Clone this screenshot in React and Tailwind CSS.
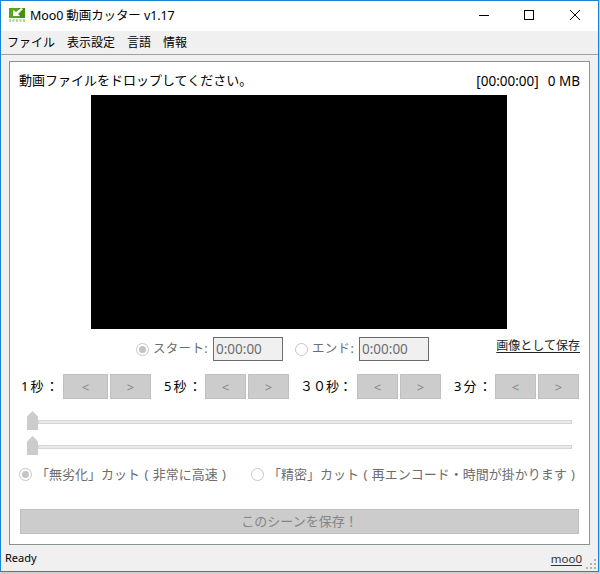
import React from "react";

const FONT = "font-['Noto_Sans','Noto_Sans_CJK_JP',sans-serif] [text-spacing-trim:space-all]";

function Radio({ checked, className = "" }) {
  return (
    <span className={`flex size-[13px] shrink-0 items-center justify-center rounded-full border border-[#c6c6c6] bg-white ${className}`}>
      {checked && <span className="size-[7px] rounded-full bg-[#c4c4c4]" />}
    </span>
  );
}

function StepButton({ children, className }) {
  return (
    <button className={`h-[25px] shrink-0 border border-[#c0c0c0] bg-[#cccccc] pt-px text-[13px] leading-none text-[#858585] ${className}`}>
      {children}
    </button>
  );
}

function TimeBox({ className = "" }) {
  return (
    <span className={`flex h-6 w-[70px] shrink-0 items-center border border-[#6b6b6b] bg-[#f0f0f0] pl-[2px] text-[13.5px] text-[#6d6d6d] ${className}`}>
      0:00:00
    </span>
  );
}

function Slider() {
  return (
    <div className="flex h-[25px] items-center pl-[17px] pr-[17px]">
      <svg width="12" height="19" viewBox="0 0 12 19" className="z-10 -mt-[2px] shrink-0">
        <path d="M0 19V5.5L5.500 0 11 5.500V19Z" fill="#cccccc" />
      </svg>
      <div className="-ml-px h-1 flex-1 border border-[#d6d6d6] bg-[#e7eaea]" />
    </div>
  );
}

export default function App() {
  return (
    <div className="h-[574px] w-[600px] overflow-hidden bg-[#cfcfcf] pr-px">
      <div className={`flex h-[572px] w-[599px] flex-col border border-[#1883d7] bg-[#f0f0f0] text-black ${FONT}`}>
        <header className="flex h-[30px] shrink-0 items-center bg-white pl-2">
          <svg width="16" height="16" viewBox="0 0 16 16" className="mt-[-1px]">
            <rect width="16" height="10" fill="#5aa51e" />
            <path d="M9 0h7v10H11z" fill="#45900f" />
            <path d="M4 2v6h7L9 6l5-5-2-1-5 4z" fill="#fff" />
            <path d="M0 11h2v3H0zM3.500 11h2v3h-2zM7 11h2v3H7zM10.500 11h2v3h-2zM14 11h2v3h-2z" fill="#b9de6c" />
          </svg>
          <span className="ml-[5px] whitespace-nowrap text-[12.5px] tracking-[-0.1px]">Moo0 動画カッター v1.17</span>
          <svg width="110" height="30" viewBox="0 0 110 30" className="ml-auto mr-[10px]" fill="none" stroke="#000">
            <path d="M1 14.5H11" />
            <rect x="46.500" y="9.500" width="9" height="9" />
            <path d="M92 9 102 19M102 9 92 19" />
          </svg>
        </header>
        <nav className="flex h-6 shrink-0 items-center border-b border-[#a0a0a0] pl-[6px] text-[12px]">
          <span className="w-[60px]">ファイル</span>
          <span className="w-[60px]">表示設定</span>
          <span className="w-9">言語</span>
          <span>情報</span>
        </nav>
        <main className="ml-2 mt-[6px] flex h-[484px] w-[581px] shrink-0 flex-col border border-[#8b9293] bg-white">
          <div className="flex h-[33px] shrink-0 items-center pl-[9px] pr-[9px] pt-[5px] text-[13px]">
            <span>動画ファイルをドロップしてください。</span>
            <span className="ml-auto text-[13.5px]">[00:00:00]</span>
            <span className="ml-[9px] text-[13.5px]">0 MB</span>
          </div>
          <div className="ml-[81px] h-[234px] w-[416px] shrink-0 bg-black" />
          <div className="flex h-[40px] shrink-0 items-center text-[12.5px] text-[#6d6d6d]">
            <Radio checked className="ml-[126px]" />
            <span className="ml-1 w-[60px] whitespace-nowrap tracking-[0.3px]">スタート:</span>
            <TimeBox />
            <Radio className="ml-[12px]" />
            <span className="ml-1 w-[47px] whitespace-nowrap tracking-[0.3px]">エンド:</span>
            <TimeBox />
            <span className="-mt-[7px] ml-auto mr-[9px] whitespace-nowrap text-[12px] text-[#222] underline underline-offset-2">画像として保存</span>
          </div>
          <div className="mt-[5px] flex h-[25px] shrink-0 items-center whitespace-nowrap pl-[11px] text-[13px]">
            <span className="w-[42px] tracking-[2px]">1秒：</span>
            <StepButton className="w-[45px]">&lt;</StepButton>
            <StepButton className="ml-0.5 w-[41px]">&gt;</StepButton>
            <span className="ml-[13px] w-[41px] tracking-[2px]">5秒：</span>
            <StepButton className="w-[41px]">&lt;</StepButton>
            <StepButton className="ml-0.5 w-[41px]">&gt;</StepButton>
            <span className="ml-[11px] w-[57px]">３０秒：</span>
            <StepButton className="w-[41px]">&lt;</StepButton>
            <StepButton className="ml-0.5 w-[41px]">&gt;</StepButton>
            <span className="ml-[13px] w-[41px] tracking-[2px]">3分：</span>
            <StepButton className="w-[41px]">&lt;</StepButton>
            <StepButton className="ml-0.5 w-[41px]">&gt;</StepButton>
          </div>
          <div className="mt-[10px] shrink-0">
            <Slider />
            <Slider />
          </div>
          <div className="mt-[3px] flex h-[25px] shrink-0 items-center whitespace-nowrap pl-[9px] text-[13px] text-[#6d6d6d] [word-spacing:1px]">
            <Radio checked />
            <span className="ml-1 w-[215px]">「無劣化」カット ( 非常に高速 )</span>
            <Radio />
            <span className="ml-1">「精密」カット ( 再エンコード・時間が掛かります )</span>
          </div>
          <button className="ml-[10px] mt-[22px] h-[25px] w-[559px] shrink-0 border border-[#c0c0c0] bg-[#cccccc] text-[13px] leading-none text-[#858585]">
            このシーンを保存！
          </button>
        </main>
        <footer className="flex flex-1 items-center pl-1 pt-px text-[11px]">
          <span>Ready</span>
          <span className="ml-auto text-[11.5px] text-[#333] underline underline-offset-2">moo0</span>
          <svg width="12" height="12" viewBox="0 0 12 12" className="ml-1 mt-3" fill="#b5b5aa">
            <path d="M8 0h2v2H8zM4 4h2v2H4zM8 4h2v2H8zM0 8h2v2H0zM4 8h2v2H4zM8 8h2v2H8z" />
          </svg>
        </footer>
      </div>
    </div>
  );
}
